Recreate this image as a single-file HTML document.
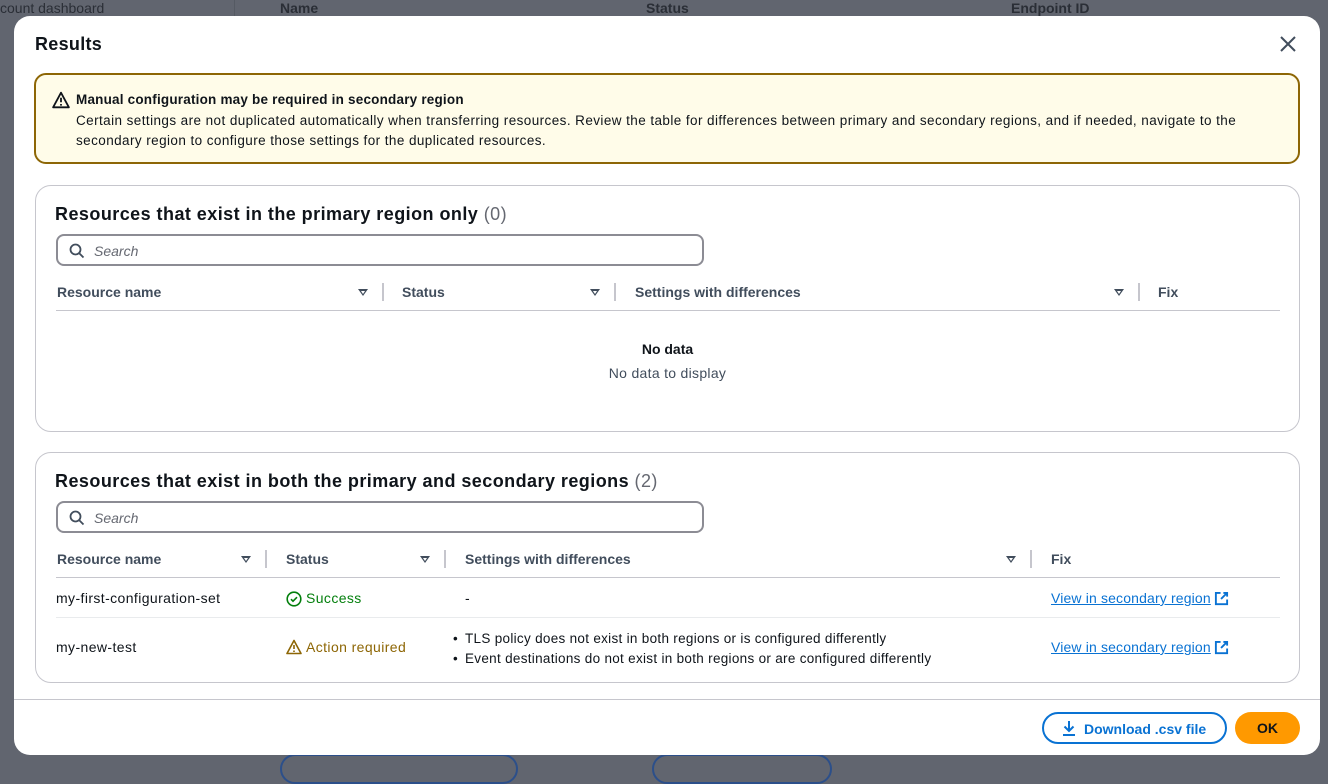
<!DOCTYPE html>
<html><head><meta charset="utf-8"><style>
*{box-sizing:border-box;margin:0;padding:0}
body{width:1328px;height:768px;overflow:hidden;background:#61656f;font-family:"Liberation Sans",sans-serif;color:#0f141a;position:relative}
.a{position:absolute;white-space:nowrap}
.bg{color:#2a2e36;font-size:14px}
.modal{position:absolute;left:14px;top:16px;width:1306px;height:739px;background:#fff;border-radius:16px;overflow:hidden}
.alert{position:absolute;left:20px;top:57px;width:1266px;height:91px;border:2px solid #8d6605;background:#fffce9;border-radius:12px}
.box{position:absolute;left:21px;width:1265px;border:1px solid #c6c6cd;border-radius:16px}
.h2{font-size:18px;font-weight:bold;letter-spacing:0.45px}
.h2 span{font-weight:normal;color:#656871}
.search{position:absolute;left:20px;width:648px;height:32px;border:2px solid #8c8c94;border-radius:8px}
.search i{position:absolute;left:36px;top:7px;font-size:14px;color:#656871;font-style:italic}
.th{font-size:14px;font-weight:bold;color:#414d5c}
.tri{position:absolute;width:0;height:0;border-left:5px solid transparent;border-right:5px solid transparent;border-top:7px solid #414d5c}
.tri:after{content:"";position:absolute;left:-2px;top:-5px;border-left:2px solid transparent;border-right:2px solid transparent;border-top:3px solid #fff}
.div{position:absolute;width:2px;height:18px;background:#c6c6cd}
.hl{position:absolute;left:20px;width:1224px;height:1px;background:#c6c6cd}
.td{font-size:14px;letter-spacing:0.4px}
.link{color:#0972d3;font-size:14px;text-decoration:underline;letter-spacing:0.15px}
</style></head><body>
<div class="a bg" style="left:0;top:0">count dashboard</div>
<div class="a bg" style="left:280px;top:0;font-weight:bold">Name</div>
<div class="a bg" style="left:646px;top:0;font-weight:bold">Status</div>
<div class="a bg" style="left:1011px;top:0;font-weight:bold">Endpoint ID</div>
<div class="a" style="left:234px;top:0;width:1px;height:16px;background:#555a63"></div>
<div class="a" style="left:280px;top:754px;width:238px;height:30px;border:2px solid #2c4f8a;border-radius:16px"></div>
<div class="a" style="left:652px;top:754px;width:180px;height:30px;border:2px solid #2c4f8a;border-radius:16px"></div>

<div class="modal">
 <div class="a" style="left:21px;top:18px;font-size:18px;font-weight:bold;letter-spacing:0.3px">Results</div>
 <svg class="a" style="left:1264px;top:18px" width="20" height="20" viewBox="0 0 20 20"><path d="M3 3L17 17M17 3L3 17" stroke="#414d5c" stroke-width="2"/></svg>
 <div class="alert">
  <svg class="a" style="left:16px;top:16px" width="18" height="18" viewBox="0 0 16 16"><path d="M8 1.5L1 14.5h14z" fill="none" stroke="#0f141a" stroke-width="1.6" stroke-linejoin="round"/><path d="M8 6v4M8 11.5v1.5" stroke="#0f141a" stroke-width="1.6"/></svg>
  <div class="a" style="left:40px;top:17px;font-size:13.5px;font-weight:bold;letter-spacing:0.2px">Manual configuration may be required in secondary region</div>
  <div class="a" style="left:40px;top:36px;font-size:13.5px;line-height:20px;letter-spacing:0.42px">Certain settings are not duplicated automatically when transferring resources. Review the table for differences between primary and secondary regions, and if needed, navigate to the<br>secondary region to configure those settings for the duplicated resources.</div>
 </div>

 <div class="box" style="top:169px;height:247px">
  <div class="a h2" style="left:19px;top:18px">Resources that exist in the primary region only <span>(0)</span></div>
  <div class="search" style="top:48px"><svg class="a" style="left:11px;top:7px" width="16" height="16" viewBox="0 0 16 16"><circle cx="6.5" cy="6.5" r="5" fill="none" stroke="#414d5c" stroke-width="1.8"/><path d="M10 10l4.5 4.5" stroke="#414d5c" stroke-width="1.8"/></svg><i>Search</i></div>
  <div class="a th" style="left:21px;top:98px">Resource name</div>
  <div class="tri" style="left:322px;top:103px"></div><div class="div" style="left:346px;top:97px"></div>
  <div class="a th" style="left:366px;top:98px">Status</div>
  <div class="tri" style="left:554px;top:103px"></div><div class="div" style="left:578px;top:97px"></div>
  <div class="a th" style="left:599px;top:98px">Settings with differences</div>
  <div class="tri" style="left:1078px;top:103px"></div><div class="div" style="left:1102px;top:97px"></div>
  <div class="a th" style="left:1122px;top:98px">Fix</div>
  <div class="hl" style="top:124px"></div>
  <div class="a" style="left:0;width:1263px;top:155px;text-align:center;font-size:14px;font-weight:bold">No data</div>
  <div class="a" style="left:0;width:1263px;top:179px;text-align:center;font-size:14px;color:#414d5c;letter-spacing:0.3px">No data to display</div>
 </div>

 <div class="box" style="top:436px;height:231px">
  <div class="a h2" style="left:19px;top:18px">Resources that exist in both the primary and secondary regions <span>(2)</span></div>
  <div class="search" style="top:48px"><svg class="a" style="left:11px;top:7px" width="16" height="16" viewBox="0 0 16 16"><circle cx="6.5" cy="6.5" r="5" fill="none" stroke="#414d5c" stroke-width="1.8"/><path d="M10 10l4.5 4.5" stroke="#414d5c" stroke-width="1.8"/></svg><i>Search</i></div>
  <div class="a th" style="left:21px;top:98px">Resource name</div>
  <div class="tri" style="left:205px;top:103px"></div><div class="div" style="left:229px;top:97px"></div>
  <div class="a th" style="left:250px;top:98px">Status</div>
  <div class="tri" style="left:384px;top:103px"></div><div class="div" style="left:408px;top:97px"></div>
  <div class="a th" style="left:429px;top:98px">Settings with differences</div>
  <div class="tri" style="left:970px;top:103px"></div><div class="div" style="left:994px;top:97px"></div>
  <div class="a th" style="left:1015px;top:98px">Fix</div>
  <div class="hl" style="top:124px"></div>
  <div class="a td" style="left:20px;top:137px">my-first-configuration-set</div>
  <svg class="a" style="left:250px;top:138px" width="16" height="16" viewBox="0 0 16 16"><circle cx="8" cy="8" r="6.8" fill="none" stroke="#037f0c" stroke-width="1.6"/><path d="M5 8.2l2 2 4-4" fill="none" stroke="#037f0c" stroke-width="1.6"/></svg>
  <div class="a td" style="left:270px;top:137px;color:#037f0c">Success</div>
  <div class="a td" style="left:429px;top:137px">-</div>
  <div class="a link" style="left:1015px;top:137px">View in secondary region</div>
  <svg class="a" style="left:1178px;top:138px" width="15" height="15" viewBox="0 0 16 16"><path d="M7 2H2v12h12V9M10 2h4v4M14 2L7.5 8.5" fill="none" stroke="#0972d3" stroke-width="2"/></svg>
  <div class="hl" style="top:164px;background:#e9ebed"></div>
  <div class="a td" style="left:20px;top:186px">my-new-test</div>
  <svg class="a" style="left:250px;top:186px" width="16" height="16" viewBox="0 0 16 16"><path d="M8 1.5L1 14.5h14z" fill="none" stroke="#8d6605" stroke-width="1.6" stroke-linejoin="round"/><path d="M8 6v4M8 11.5v1.5" stroke="#8d6605" stroke-width="1.6"/></svg>
  <div class="a td" style="left:270px;top:186px;color:#8d6605">Action required</div>
  <div class="a" style="left:417px;top:176px;font-size:13.5px;line-height:20px">•</div>
  <div class="a" style="left:417px;top:196px;font-size:13.5px;line-height:20px">•</div>
  <div class="a" style="left:429px;top:176px;font-size:13.5px;line-height:20px;letter-spacing:0.3px">TLS policy does not exist in both regions or is configured differently<br>Event destinations do not exist in both regions or are configured differently</div>
  <div class="a link" style="left:1015px;top:186px">View in secondary region</div>
  <svg class="a" style="left:1178px;top:187px" width="15" height="15" viewBox="0 0 16 16"><path d="M7 2H2v12h12V9M10 2h4v4M14 2L7.5 8.5" fill="none" stroke="#0972d3" stroke-width="2"/></svg>
 </div>

 <div class="a" style="left:0;top:683px;width:1306px;height:1px;background:#c6c6cd"></div>
 <div class="a" style="left:1028px;top:696px;width:185px;height:32px;border:2px solid #0972d3;border-radius:16px;color:#0972d3;font-size:14px;font-weight:bold">
  <svg class="a" style="left:17px;top:6px" width="16" height="16" viewBox="0 0 16 16"><path d="M8 1v10M3.5 6.5L8 11l4.5-4.5M2 15h12" fill="none" stroke="#0972d3" stroke-width="2"/></svg>
  <span class="a" style="left:40px;top:7px">Download .csv file</span></div>
 <div class="a" style="left:1221px;top:696px;width:65px;height:32px;background:#ff9900;border-radius:16px;font-size:14px;font-weight:bold;text-align:center;line-height:32px">OK</div>
</div>
</body></html>
